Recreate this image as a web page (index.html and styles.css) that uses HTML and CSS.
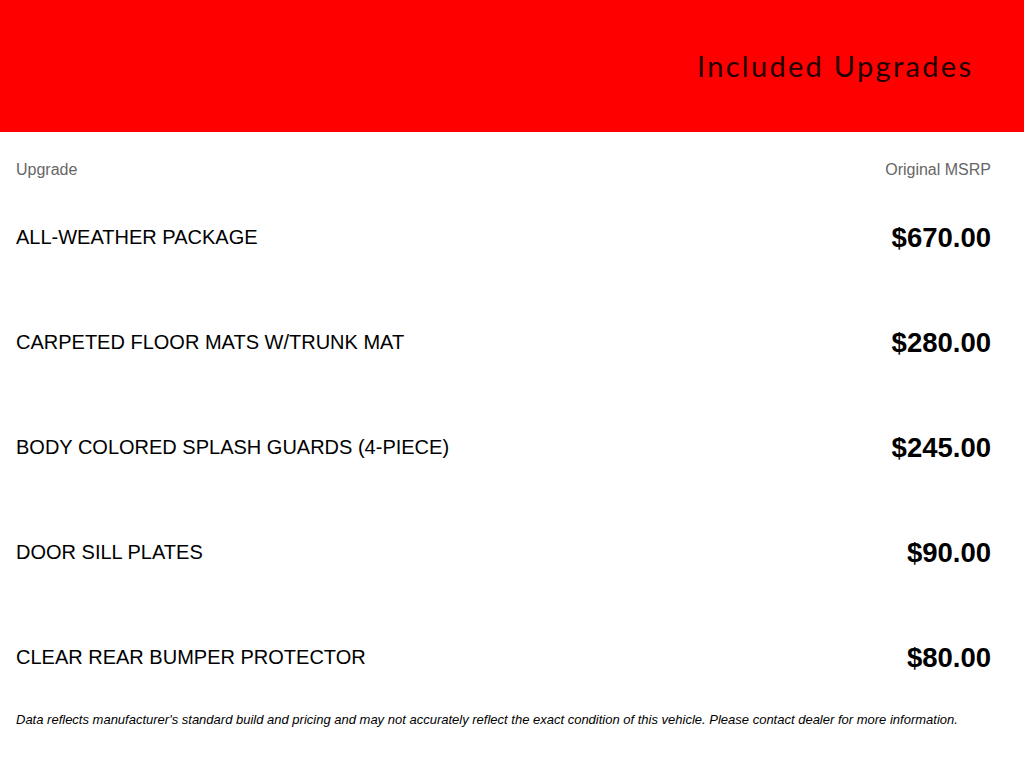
FILE: index.html
```html
<!DOCTYPE html>
<html>
<head>
<meta charset="utf-8">
<link rel="stylesheet" href="styles.css">
</head>
<body>
<header class="banner">
  <h1 class="banner-title">Included Upgrades</h1>
</header>
<main class="upgrades">
  <div class="labels">
    <span>Upgrade</span>
    <span>Original MSRP</span>
  </div>
  <ul class="list">
    <li class="row"><span class="name">ALL-WEATHER PACKAGE</span><span class="price">$670.00</span></li>
    <li class="row"><span class="name">CARPETED FLOOR MATS W/TRUNK MAT</span><span class="price">$280.00</span></li>
    <li class="row"><span class="name">BODY COLORED SPLASH GUARDS (4-PIECE)</span><span class="price">$245.00</span></li>
    <li class="row"><span class="name">DOOR SILL PLATES</span><span class="price">$90.00</span></li>
    <li class="row"><span class="name">CLEAR REAR BUMPER PROTECTOR</span><span class="price">$80.00</span></li>
  </ul>
  <p class="disclaimer">Data reflects manufacturer's standard build and pricing and may not accurately reflect the exact condition of this vehicle. Please contact dealer for more information.</p>
</main>
</body>
</html>
```

FILE: styles.css
```css
html, body {
  margin: 0;
  padding: 0;
  background: #ffffff;
  font-family: "Liberation Sans", Arial, sans-serif;
  color: #000;
}

.banner {
  height: 132px;
  box-sizing: border-box;
  background: #ff0000;
  display: flex;
  align-items: center;
  justify-content: flex-end;
  padding: 0 53px 2px 0;
}

.banner-title {
  margin: 0 -2.3px 0 0;
  font-family: "Lato", sans-serif;
  font-weight: 400;
  font-size: 29px;
  color: #220000;
  letter-spacing: 2.3px;
}

.upgrades {
  padding: 28px 33px 0 16px;
}

.labels {
  display: flex;
  justify-content: space-between;
  font-size: 16px;
  line-height: 20px;
  color: #666666;
}

.list {
  list-style: none;
  margin: 0;
  padding: 0;
  margin-top: 5px;
}

.row {
  height: 105px;
  display: flex;
  align-items: center;
  justify-content: space-between;
}

.name {
  font-size: 20px;
}

.price {
  font-size: 27.5px;
  font-weight: 700;
}

.disclaimer {
  margin: 2px 0 0;
  font-size: 13px;
  line-height: 15px;
  font-style: italic;
}
```
